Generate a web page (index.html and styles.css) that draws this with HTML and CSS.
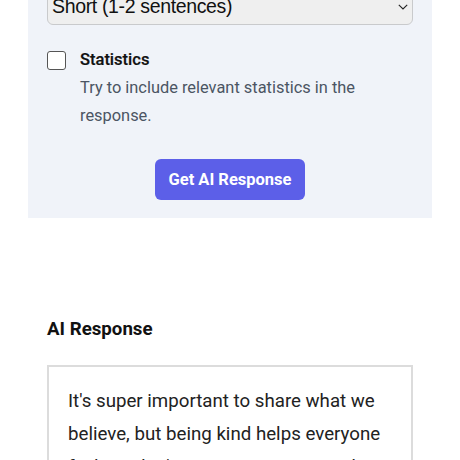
FILE: index.html
```html
<!DOCTYPE html>
<html>
<head>
<meta charset="utf-8">
<link rel="stylesheet" href="styles.css">
</head>
<body>
<div class="page">
  <section class="panel">
    <div class="select">
      <span class="select-text">Short (1-2 sentences)</span>
      <svg class="chev" width="10" height="6" viewBox="0 0 10 6"><path d="M0.8 0.8 L5 5 L9.2 0.8" fill="none" stroke="#222" stroke-width="1.1"/></svg>
    </div>
    <div class="option">
      <span class="checkbox"></span>
      <div class="option-text">
        <div class="option-title">Statistics</div>
        <div class="option-desc">Try to include relevant statistics in the response.</div>
      </div>
    </div>
    <div class="actions">
      <button class="btn">Get AI Response</button>
    </div>
  </section>
  <section class="result">
    <h2 class="result-title">AI Response</h2>
    <div class="result-box">
      <p>It's super important to share what we believe, but being kind helps everyone feel good! It's super important to share what we believe.</p>
    </div>
  </section>
</div>
</body>
</html>
```

FILE: styles.css
```css
html, body { margin: 0; padding: 0; background: #fff; overflow: hidden; }
body { font-family: Roboto, "Noto Sans", sans-serif; color: #111; }
.page { padding: 0 28px; margin-top: -19px; }
.panel { background: #f0f3f9; padding: 0 19px 18px; }
.select {
  height: 44px; box-sizing: border-box;
  border: 1px solid #c9cacc; border-radius: 6px; background: #efefef;
  display: flex; align-items: center; justify-content: space-between;
  padding: 0 4px 0 4px;
}
.select-text { font-family: "Liberation Sans", Arial, sans-serif; font-size: 19.5px; letter-spacing: -0.35px; color: #111; padding-top: 7px; }
.chev { margin-top: 7px; }
.option { display: flex; gap: 14px; margin-top: 23px; }
.checkbox {
  width: 17px; height: 17px; border: 1.5px solid #555; border-radius: 3px; background: #fff;
  flex: none; margin-top: 3px;
}
.option-title { font-size: 16.5px; font-weight: 500; line-height: 24px; color: #111; -webkit-text-stroke: 0.2px #111; }
.option-desc { font-size: 16.4px; line-height: 28px; color: #4b5563; margin-top: 2px; max-width: 300px; }
.actions { display: flex; justify-content: center; margin-top: 29px; }
.btn {
  font-family: Roboto, sans-serif; font-size: 16.5px; font-weight: 700; color: #fff;
  background: #5c5fe8; border: none; border-radius: 6px; width: 150px; height: 41px;
}
.result { padding: 0 19px; }
.result-title { font-size: 18.7px; font-weight: 700; margin: 99px 0 0; line-height: 24px; }
.result-box { border: 2px solid #dcdcdc; margin-top: 24px; padding: 18px 19px; }
.result-box p { margin: 0; font-size: 18.7px; line-height: 33px; color: #222; }
```
